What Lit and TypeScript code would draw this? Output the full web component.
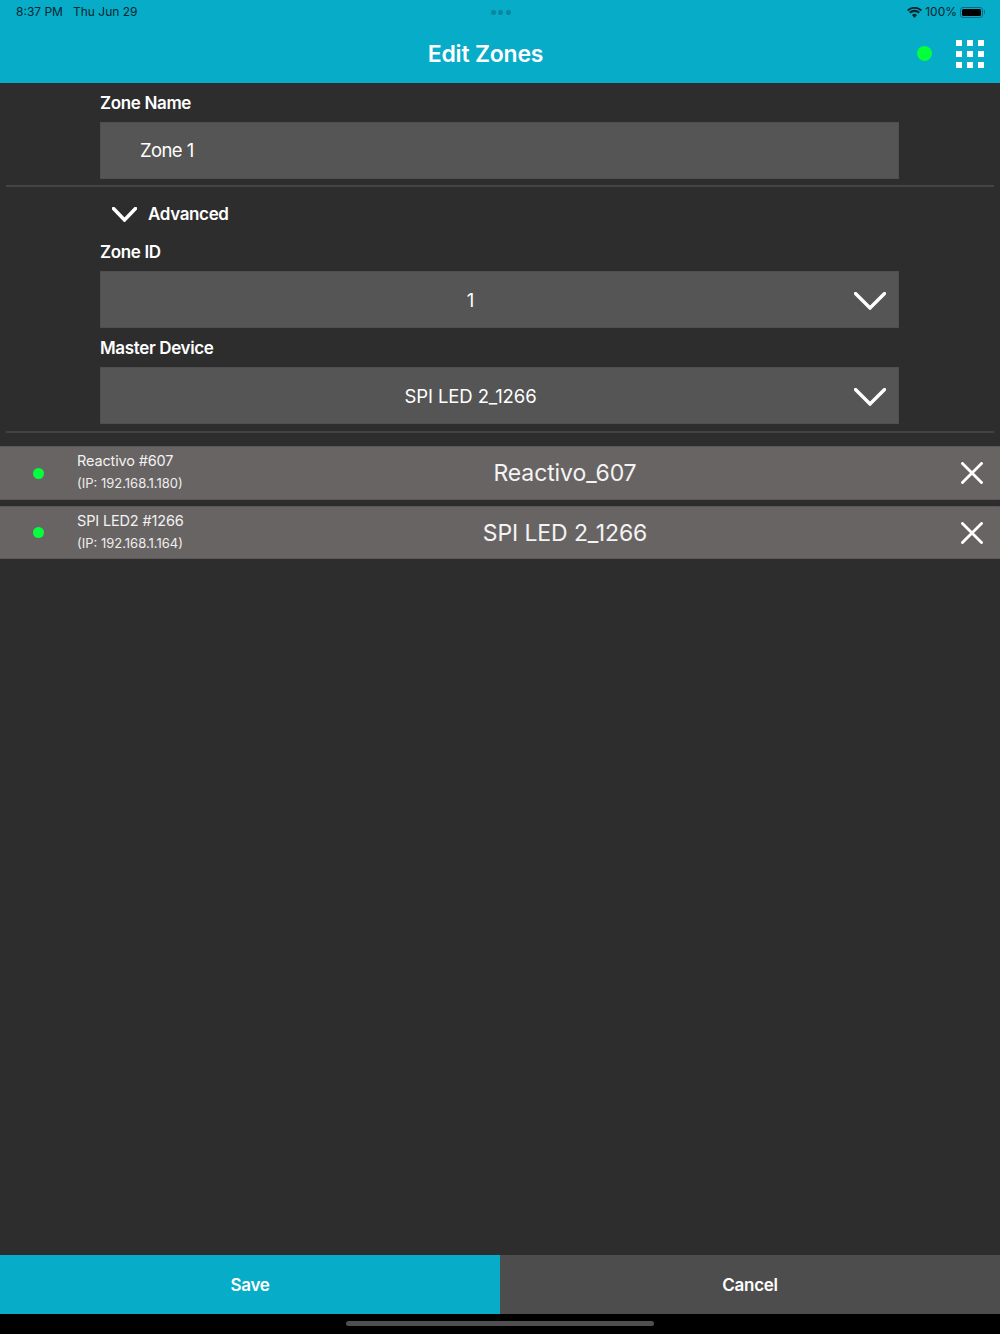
import { LitElement, html, css, svg } from "lit";
import { customElement } from "lit/decorators.js";

const chevron = (w: number, h: number, sw: number) => html`<svg width=${w} height=${h} viewBox="0 0 ${w} ${h}" fill="none" stroke="#fff" stroke-width=${sw} stroke-linecap="round" stroke-linejoin="miter">${svg`<path d="M1.5 1.5 L${w / 2} ${h - 2} L${w - 1.5} 1.5"/>`}</svg>`;
const cross = html`<svg width="22" height="22" viewBox="0 0 22 22" fill="none" stroke="#fff" stroke-width="2.8" stroke-linecap="square"><path d="M1.5 1.5 L20.5 20.5 M20.5 1.5 L1.5 20.5"/></svg>`;

@customElement("app-root")
export class AppRoot extends LitElement {
  static styles = css`
    :host { display: flex; flex-direction: column; width: 1000px; height: 1334px; background: #2d2d2d; color: #fff; font-family: Inter, "Liberation Sans", sans-serif; overflow: hidden; }
    .top { height: 83px; flex: none; background: #06acc8; position: relative; box-sizing: border-box; }
    .status { height: 24px; display: flex; align-items: center; justify-content: space-between; padding: 0 15px 0 16px; color: #08262d; font-size: 12px; line-height: 24px; }
    .status-l { display: flex; gap: 10px; flex: 1; }
    .status-r { display: flex; align-items: center; gap: 3px; flex: 1; justify-content: flex-end; }
    .dots { display: flex; gap: 2.5px; }
    .dots i { width: 5px; height: 5px; border-radius: 50%; background: #0a86a0; }
    .batt { width: 23px; height: 11px; border: 1px solid #0b6a80; border-radius: 3px; padding: 1px; box-sizing: border-box; margin-right: 2px; display: flex; position: relative; }
    .batt b { flex: 1; background: #000; border-radius: 1.5px; }
    .batt::after { content: ""; position: absolute; right: -3px; top: 2.5px; width: 1.5px; height: 4px; background: #0b6a80; border-radius: 0 1px 1px 0; }
    .nav { height: 59px; display: flex; align-items: center; position: relative; }
    .title { position: absolute; left: 0; width: 971px; text-align: center; font-size: 23px; font-weight: 600; top: 15px; line-height: 30px; letter-spacing: -0.2px; }
    .online { position: absolute; left: 917px; top: 22px; width: 15px; height: 15px; border-radius: 50%; background: #04ff3c; }
    .grid { position: absolute; left: 956px; top: 16px; display: grid; grid-template-columns: repeat(3, 6px); gap: 5px; }
    .grid i { width: 6px; height: 6px; background: #fff; }
    .main { flex: 1; display: flex; flex-direction: column; }
    .sec { padding: 0 101px 0 100px; }
    .label { font-size: 17px; font-weight: 600; line-height: 22px; letter-spacing: -0.35px; }
    .field { height: 57px; background: #555; display: flex; align-items: center; font-size: 18.5px; position: relative; letter-spacing: -0.1px; box-shadow: inset 0 0 0 1px #4f4f4f; box-sizing: border-box; }
    .input { padding: 0 0 2px 40px; letter-spacing: -0.6px; }
    .select { justify-content: center; padding-right: 58px; }
    .select svg { position: absolute; right: 13px; top: 21px; }
    .rule { height: 2px; background: #434343; margin: 0 6px; }
    .adv { display: flex; align-items: center; height: 22px; padding-left: 12px; gap: 11px; font-size: 17px; font-weight: 600; letter-spacing: -0.35px; }
    .row { background: #696464; display: flex; align-items: center; position: relative; box-shadow: inset 0 1px 0 #5c5858, inset 0 -1px 0 #5c5858; }
    .led { width: 11px; height: 11px; border-radius: 50%; background: #04ff3c; margin-left: 33px; flex: none; }
    .info { margin: 0 0 2px 33px; width: 210px; flex: none; }
    .info div { font-size: 14.5px; line-height: 20px; letter-spacing: -0.15px; color: #f2f2f2; }
    .info small { display: block; font-size: 13px; line-height: 19px; margin-top: 3px; color: #eee; }
    .name { position: absolute; left: 130px; right: 0; text-align: center; font-size: 23px; letter-spacing: -0.1px; color: #f4f4f4; }
    .x { position: absolute; left: 961px; top: calc(50% - 11px); width: 22px; height: 22px; }
    .foot { height: 59px; flex: none; display: flex; }
    .foot div { flex: 1; display: flex; align-items: center; justify-content: center; font-size: 17px; font-weight: 600; letter-spacing: -0.3px; }
    .save { background: #06acc8; }
    .cancel { background: #4d4d4d; }
    .home { height: 20px; flex: none; background: #000; display: flex; justify-content: center; padding-top: 7px; box-sizing: border-box; }
    .home i { width: 308px; height: 5px; border-radius: 3px; background: #4f4f4f; }
  `;

  private device(title: string, ip: string, name: string, mt: number, h: number) {
    return html`<div class="row" style="margin-top:${mt}px;height:${h}px">
      <span class="led"></span>
      <div class="info"><div>${title}</div><small>(IP: ${ip})</small></div>
      <div class="name">${name}</div>
      <span class="x">${cross}</span>
    </div>`;
  }

  render() {
    return html`
      <div class="top">
        <div class="status">
          <div class="status-l"><span>8:37 PM</span><span>Thu Jun 29</span></div>
          <div class="dots"><i></i><i></i><i></i></div>
          <div class="status-r">
            <svg width="15" height="11" viewBox="0 0 15 11" fill="#08262d"><path d="M7.5 11 5 8a3.6 3.6 0 0 1 5 0ZM3.4 6.6 2 5a8 8 0 0 1 11 0l-1.4 1.6a6 6 0 0 0-8.2 0ZM1.2 4.2 0 2.8a11 11 0 0 1 15 0l-1.2 1.4a9.4 9.4 0 0 0-12.6 0Z"/></svg>
            <span>100%</span>
            <span class="batt"><b></b></span>
          </div>
        </div>
        <div class="nav">
          <div class="title">Edit Zones</div>
          <span class="online"></span>
          <div class="grid">${Array.from({ length: 9 }, () => html`<i></i>`)}</div>
        </div>
      </div>
      <div class="main">
        <div class="sec" style="padding-top:9px">
          <div class="label">Zone Name</div>
          <div class="field input" style="margin-top:8px">Zone 1</div>
        </div>
        <div class="rule" style="margin-top:6px"></div>
        <div class="sec" style="padding-top:16px">
          <div class="adv">${chevron(25, 15, 3.5)}<span>Advanced</span></div>
          <div class="label" style="margin-top:16px">Zone ID</div>
          <div class="field select" style="margin-top:8px">1${chevron(32, 18, 3.4)}</div>
          <div class="label" style="margin-top:9px">Master Device</div>
          <div class="field select" style="margin-top:8px">SPI LED 2_1266${chevron(32, 18, 3.4)}</div>
        </div>
        <div class="rule" style="margin-top:7px"></div>
        ${this.device("Reactivo #607", "192.168.1.180", "Reactivo_607", 13, 54)}
        ${this.device("SPI LED2 #1266", "192.168.1.164", "SPI LED 2_1266", 6, 53)}
      </div>
      <div class="foot"><div class="save">Save</div><div class="cancel">Cancel</div></div>
      <div class="home"><i></i></div>
    `;
  }
}
